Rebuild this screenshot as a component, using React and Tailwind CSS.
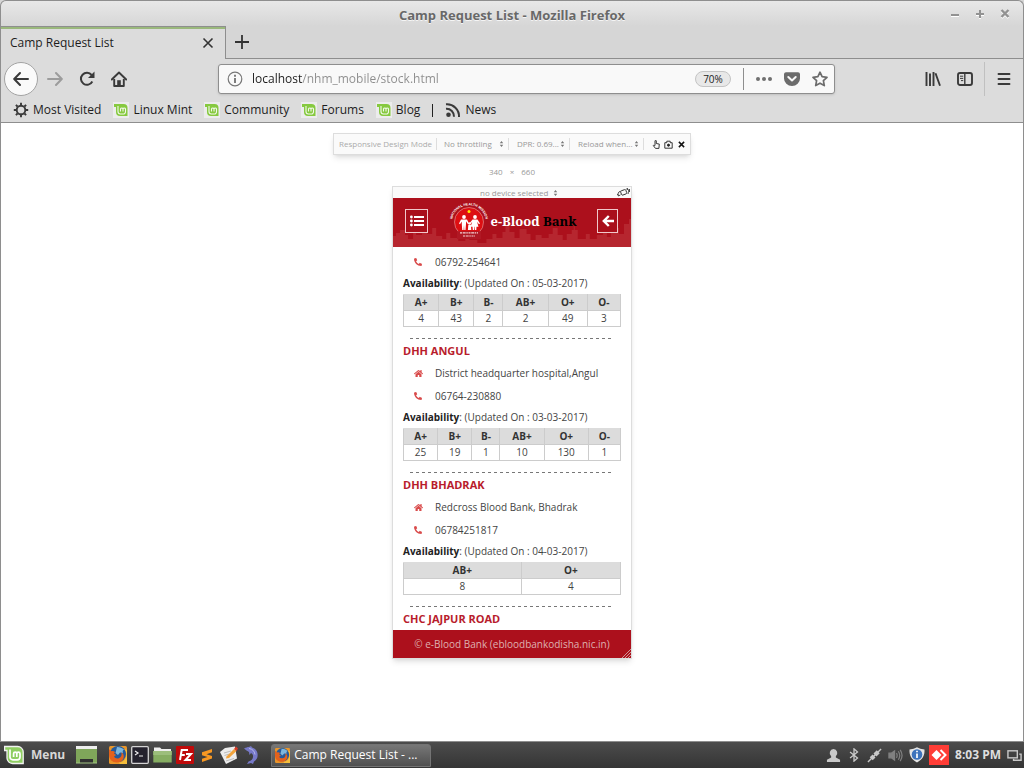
import React from "react";
import { FaHome, FaPhoneAlt } from "react-icons/fa";

const BANKS = [
  {
    phone: "06792-254641",
    updated: "05-03-2017",
    stock: [["A+", 4, "w-[35px]"], ["B+", 43, "w-[35px]"], ["B-", 2, "w-[29px]"], ["AB+", 2, "w-[45px]"], ["O+", 49, "w-[39px]"], ["O-", 3, "w-[33px]"]],
  },
  {
    name: "DHH ANGUL",
    address: "District headquarter hospital,Angul",
    phone: "06764-230880",
    updated: "03-03-2017",
    stock: [["A+", 25, "w-[34px]"], ["B+", 19, "w-[34px]"], ["B-", 1, "w-[28px]"], ["AB+", 10, "w-[44px]"], ["O+", 130, "w-[44px]"], ["O-", 1, "w-[32px]"]],
  },
  {
    name: "DHH BHADRAK",
    address: "Redcross Blood Bank, Bhadrak",
    phone: "06784251817",
    updated: "04-03-2017",
    stock: [["AB+", 8, "w-[117px]"], ["O+", 4, "w-[99px]"]],
  },
];

function MintMark({ className }) {
  return (
    <svg viewBox="0 0 16 16" className={className} aria-hidden="true">
      <rect width="16" height="16" fill="#ececec" />
      <path d="M1 2h9.5a4 4 0 0 1 4 4v8H7a4 4 0 0 1-4-4V5H1z" fill="#86c93f" />
      <path d="M5 4v5.6A2.4 2.4 0 0 0 7.4 12h2.8a2.3 2.3 0 0 0 2.3-2.4V7a1.3 1.3 0 0 0-2.5 0v2.5V7a1.3 1.3 0 0 0-2.5 0v2.5" fill="none" stroke="#f3f9ec" strokeWidth="1.1" />
    </svg>
  );
}

function MintLogo({ className }) {
  return (
    <svg viewBox="0 0 20 20" className={className} aria-hidden="true">
      <path d="M.6 1.5h13a5.6 5.6 0 0 1 5.6 5.6v11.4H8.5A5.6 5.6 0 0 1 3 13V5.500H.6z" fill="#8fce62" stroke="#f2f2f2" strokeWidth="1.3" />
      <path d="M6 4.500V12a2.800 2.800 0 0 0 2.800 2.800h4.400A2.800 2.800 0 0 0 16 12V8.700a1.600 1.600 0 0 0-3.200 0V12 8.700a1.600 1.600 0 0 0-3.200 0V12" fill="none" stroke="#fff" strokeWidth="1.7" />
    </svg>
  );
}

function FirefoxIcon({ className }) {
  return (
    <svg viewBox="0 0 18 18" className={className} aria-hidden="true">
      <rect width="18" height="18" rx="1.5" fill="#e9962b" />
      <circle cx="9" cy="8" r="8" fill="#245a9c" />
      <path d="M8 1c3 0 5 1 7 2.500-1.500 1-1.500 2-1 3.500l-3-.5-2 2.500-2.500-2z" fill="#7db7dd" />
      <path d="M0 3.500c1.200.2 2 .9 2.400 1.800C3.600 4.800 5 5 6 6L5 7.800l2.200 1.200-2.200 1.500c1 2.400 5 2.700 6.800.2 1-1.500 1-3 .4-4.500 2.300 1 3.100 3.500 2.300 6-1 2.800-3.700 4.300-6.700 4.300C3.500 16.500 0 13.500 0 9z" fill="#e4611c" />
      <path d="M15.500 3c2.200 3 2.500 6.500.9 9.500-1.400 2.500-3.600 3.800-6.400 4.300L11 18h7V4z" fill="#f6bf3c" />
    </svg>
  );
}

function Updown() {
  return (
    <svg viewBox="0 0 5 7" className="pointer-events-none h-[6px] w-[5px] shrink-0" fill="#777" aria-hidden="true">
      <path d="M2.500 0 4.500 2.500H.5zM2.500 7 .5 4.500h4z" />
    </svg>
  );
}

function ToolSelect({ label, value, width, className = "" }) {
  return (
    <label className={"flex h-full items-center justify-end border-r border-[#ddd] pr-1 " + className}>
      <select aria-label={label} className={"appearance-none bg-transparent text-[8px] leading-3 text-[#999] outline-none " + width}>
        <option>{value}</option>
      </select>
      <Updown />
    </label>
  );
}

function WindowTitle() {
  return (
    <header className="flex h-[26px] shrink-0 items-center rounded-t-md border border-b-0 border-[#8e8e8e] bg-linear-to-b from-[#e8e8e8] to-[#d6d6d6] px-[10px]">
      <span className="w-[76px]" />
      <h1 className="flex-1 pt-[3px] text-center text-[13px] leading-5 font-bold text-[#686868] [text-shadow:0_1px_0_#f5f5f5]">Camp Request List - Mozilla Firefox</h1>
      <div className="flex w-[76px] items-center justify-end gap-[9px] pt-px text-[#929292]">
        <button aria-label="Minimize" className="size-4">
          <svg viewBox="0 0 16 16" className="drop-shadow-[0_1px_0_#fff]"><path d="M4 9h8" stroke="currentColor" strokeWidth="2" /></svg>
        </button>
        <button aria-label="Maximize" className="size-4">
          <svg viewBox="0 0 16 16" className="drop-shadow-[0_1px_0_#fff]"><path d="M4 8h8M8 4v8" stroke="currentColor" strokeWidth="2" /></svg>
        </button>
        <button aria-label="Close window" className="size-4">
          <svg viewBox="0 0 16 16" className="drop-shadow-[0_1px_0_#fff]"><path d="m4.500 4 7 7m0-7-7 7" stroke="currentColor" strokeWidth="2.400" /></svg>
        </button>
      </div>
    </header>
  );
}

function TabStrip() {
  return (
    <div className="flex h-[33px] shrink-0 bg-[#d6d6d6]">
      <div className="flex w-[225px] items-center justify-between border-t border-r border-[#8e8e8e] bg-[#dcdcdc] pr-[11px] pl-[9px] shadow-[inset_0_2px_0_#9ab87c]">
        <span className="text-[12px] leading-4 text-[#1c1c1c]">Camp Request List</span>
        <button aria-label="Close tab" className="size-3 text-[#333]">
          <svg viewBox="0 0 12 12" fill="none" stroke="currentColor" strokeWidth="1.6"><path d="m1.500 1.500 9 9m0-9-9 9" /></svg>
        </button>
      </div>
      <div className="flex flex-1 items-center border-b border-[#8e8e8e] pl-2">
        <button aria-label="New tab" className="size-4 text-[#333]">
          <svg viewBox="0 0 16 16" fill="none" stroke="currentColor" strokeWidth="1.800"><path d="M8 1v14M1 8h14" /></svg>
        </button>
      </div>
    </div>
  );
}

function NavBar() {
  return (
    <div className="flex h-10 shrink-0 items-center bg-[#dcdcdc] text-[#3a3a3a]">
      <button aria-label="Back" className="ml-[3px] flex size-[34px] items-center justify-center rounded-full border border-[#a3a3a3] bg-[#fafafa]">
        <svg viewBox="0 0 16 16" className="size-4" fill="none" stroke="currentColor" strokeWidth="2" strokeLinecap="round" strokeLinejoin="round"><path d="M15 8H1.500M7 2 1.200 8 7 14" /></svg>
      </button>
      <button aria-label="Forward" className="ml-[9px] text-[#9c9c9c]">
        <svg viewBox="0 0 16 16" className="size-4" fill="none" stroke="currentColor" strokeWidth="2" strokeLinecap="round" strokeLinejoin="round"><path d="M1 8h13.500M9 2 14.800 8 9 14" /></svg>
      </button>
      <button aria-label="Reload" className="ml-4">
        <svg viewBox="0 0 16 16" className="size-4" fill="none" stroke="currentColor" strokeWidth="2"><path d="M13.300 10.500A6 6 0 1 1 12.600 4" /><path d="M15.500.5V7H9z" fill="currentColor" stroke="none" /></svg>
      </button>
      <button aria-label="Home" className="ml-4">
        <svg viewBox="0 0 16 16" className="size-4" fill="none" stroke="currentColor" strokeWidth="1.900" strokeLinejoin="round"><path d="M.8 8.500 8 1.500l7.200 7" strokeLinecap="round" /><path d="M3.200 8v7h9.600V8" /><path d="M6.200 9.200h3.600V15H6.200z" fill="currentColor" stroke="none" /></svg>
      </button>
      <form className="ml-[91px] flex h-[30px] max-w-[617px] flex-1 items-center rounded-[3px] border border-[#8e8e8e] bg-[#f9f9f9] px-[6px] shadow-sm">
        <svg viewBox="0 0 16 16" className="ml-[2px] size-4 shrink-0 text-[#777]" fill="none" stroke="currentColor"><circle cx="8" cy="8" r="6.800" strokeWidth="1.200" /><path d="M8 7v5" strokeWidth="1.900" /><path d="M8 3.800v2" strokeWidth="1.900" /></svg>
        <input aria-label="Address" defaultValue="localhost/nhm_mobile/stock.html" className="ml-[9px] min-w-0 flex-1 bg-[linear-gradient(to_right,#1c1c1c_50px,#8c8c8c_50px)] bg-clip-text text-[12px] leading-5 text-transparent outline-none" />
        <button type="button" className="h-4 w-9 rounded-full border border-[#c4c4c4] bg-[#e8e8e8] text-[10px] leading-[13px] text-[#222]">70%</button>
        <span className="mx-3 h-[22px] w-px bg-[#8e8e8e]" />
        <button type="button" aria-label="Page actions" className="text-[#707070]">
          <svg viewBox="0 0 16 16" className="size-4" fill="currentColor"><circle cx="2" cy="8" r="2" /><circle cx="8" cy="8" r="2" /><circle cx="14" cy="8" r="2" /></svg>
        </button>
        <button type="button" aria-label="Save to Pocket" className="ml-3 text-[#6c6c6c]">
          <svg viewBox="0 0 16 16" className="size-4"><path d="M2 1.200h12A2 2 0 0 1 16 3v4.500a8 7.500 0 0 1-16 0V3a2 2 0 0 1 2-1.800z" fill="currentColor" /><path d="m4.300 6 3.700 3.500L11.700 6" fill="none" stroke="#f9f9f9" strokeWidth="2" strokeLinecap="round" strokeLinejoin="round" /></svg>
        </button>
        <button type="button" aria-label="Bookmark this page" className="ml-3 text-[#6c6c6c]">
          <svg viewBox="0 0 16 16" className="size-4" fill="none" stroke="currentColor" strokeWidth="1.700" strokeLinejoin="round"><path d="m8 1.200 2.100 4.500 4.900.6-3.600 3.400.9 4.900L8 12.200l-4.300 2.400.9-4.900L1 6.300l4.900-.6z" /></svg>
        </button>
      </form>
      <div className="ml-auto flex items-center">
        <button aria-label="Library">
          <svg viewBox="0 0 16 16" className="size-4" fill="none" stroke="currentColor" strokeWidth="1.900"><path d="M1.500 1v14M5 2.500V15M8.500 1v14M10.500 2.200 15 14.700" /></svg>
        </button>
        <button aria-label="Sidebars" className="ml-4">
          <svg viewBox="0 0 16 16" className="size-4" fill="none" stroke="currentColor"><rect x="1" y="2" width="14" height="12" rx="2" strokeWidth="1.900" /><path d="M7.800 2v12" strokeWidth="1.400" /><path d="M3 5.200h3.200M3 7.400h3.200M4 9.600h2.200" /></svg>
        </button>
        <span className="ml-[11px] h-[34px] w-px bg-[#c0c0c0]" />
        <button aria-label="Open menu" className="mr-[11px] ml-[11px]">
          <svg viewBox="0 0 16 16" className="size-4" fill="none" stroke="currentColor" strokeWidth="1.900" strokeLinecap="round"><path d="M2.500 3h11M2.500 8h11M2.500 13h11" /></svg>
        </button>
      </div>
    </div>
  );
}

function BookmarksBar() {
  const sites = ["Linux Mint", "Community", "Forums", "Blog"];
  return (
    <nav className="flex h-6 shrink-0 items-center border-b border-[#8e8e8e] bg-[#dcdcdc] pb-px pl-3 text-[12px] leading-4 text-[#1c1c1c]">
      <a href="#most-visited" className="flex items-center gap-1">
        <svg viewBox="0 0 16 16" className="size-4" fill="none" stroke="#3a3a3a"><circle cx="8" cy="8" r="4.300" strokeWidth="1.900" /><path d="M8 3V.8M8 13v2.200M3 8H.8M13 8h2.200M4.500 4.500 2.900 2.900M11.500 11.500l1.600 1.600M4.500 11.500l-1.600 1.600M11.500 4.500l1.600-1.600" strokeWidth="1.900" /></svg>
        Most Visited
      </a>
      {sites.map((site) => (
        <a key={site} href="#site" className="ml-3 flex items-center gap-1">
          <MintMark className="size-4" />
          {site}
        </a>
      ))}
      <span className="mx-3 h-[13px] w-px bg-[#222]" />
      <a href="#news" className="flex items-center gap-1">
        <svg viewBox="0 0 16 16" className="size-4" fill="none" stroke="#3a3a3a" strokeWidth="2"><circle cx="3.500" cy="12.700" r="2.300" fill="#3a3a3a" stroke="none" /><path d="M1 6.800a7.500 7.500 0 0 1 8 8M1 2.300A12 12 0 0 1 14 15" /></svg>
        News
      </a>
    </nav>
  );
}

function ResponsiveToolbar() {
  return (
    <div className="mt-[10px] flex h-[22px] w-[358px] items-center border border-[#ddd] bg-[#fafafa] py-1 text-[8px] text-[#aaa] shadow-md">
      <span className="w-[103px] border-r border-[#ddd] pl-[5px] leading-3 whitespace-nowrap">Responsive Design Mode</span>
      <ToolSelect label="Network throttling" value="No throttling" width="w-[55px]" className="w-[72px]" />
      <ToolSelect label="Device pixel ratio" value="DPR: 0.69..." width="w-[43px]" className="w-[61px]" />
      <ToolSelect label="Reload behaviour" value="Reload when..." width="w-[56px]" className="w-[74px]" />
      <div className="flex flex-1 items-center justify-center gap-[3px] pl-[2px] text-[#222]">
        <button aria-label="Touch simulation">
          <svg viewBox="0 0 9 9" className="size-[9px]" fill="none" stroke="currentColor" strokeWidth=".9" strokeLinejoin="round"><path d="M3 5.500V1a.6.6 0 0 1 1.300 0v2.500l3 .6-.4 4.300H3.500L1.300 5.600c.3-.7 1-.5 1.700.4" /></svg>
        </button>
        <button aria-label="Take a screenshot">
          <svg viewBox="0 0 9 9" className="size-[9px]" fill="none" stroke="currentColor" strokeWidth=".9"><path d="M.8 2.700h2v-1.500h3.400v1.500h2v5.500H.8z" /><circle cx="4.500" cy="5.200" r="1.100" fill="currentColor" /></svg>
        </button>
        <button aria-label="Close responsive mode" className="ml-[2px]">
          <svg viewBox="0 0 8 8" className="size-[7px]" fill="none" stroke="#111" strokeWidth="1.700"><path d="m1 1 6 6m0-6L1 7" /></svg>
        </button>
      </div>
    </div>
  );
}

function Emblem() {
  return (
    <svg viewBox="0 0 42 36" className="h-9 w-[42px] shrink-0" aria-hidden="true">
      <defs><path id="emblem-arc" d="M7.500 29.500A17 17 0 1 1 34.500 29.500" /></defs>
      <circle cx="21" cy="19" r="14.500" fill="#dd0f12" stroke="#e9a6a6" strokeWidth=".6" />
      <text fontSize="3.400" fontWeight="700" fill="#fff" fontFamily="Liberation Sans, Arial, sans-serif" textAnchor="middle">
        <textPath href="#emblem-arc" startOffset="50%">NATIONAL HEALTH MISSION</textPath>
      </text>
      <circle cx="21" cy="8.500" r="1.500" fill="#ffe800" />
      <g fill="#fff">
        <circle cx="16" cy="14" r="1.900" />
        <path d="M13 16.500h6l2 4-1 .8-2-3v2.700l-.5 6h-1.200L16 22l-.4 5h-1.400l-.4-6v-2.500L12 21.300l-1-.8z" />
        <circle cx="27" cy="14" r="1.900" />
        <path d="M24.500 16.500h5l2.500 4-1 .8-2-2.500 1.500 5h-2L28.300 27H27l-.2-3.200h-.4L26.200 27h-1.400l-.3-3.200h-2l1.800-5-2 2.500-1-.8z" />
        <circle cx="21.500" cy="20.500" r="1.300" />
        <path d="M20.300 22h2.600l.4 5h-3.400z" />
      </g>
      <rect x="9" y="28.200" width="24" height="8" fill="#b01824" />
      <path d="M12 29.800h18M15 33h12" stroke="#f4d4d4" strokeWidth="1.200" strokeDasharray="2 .7 3 .6 1.500 .7" />
    </svg>
  );
}

function AppHeader() {
  return (
    <header className="relative flex h-[49px] items-center justify-between bg-[#ac101c] pr-[13px] pb-[3px] pl-3">
      <svg viewBox="0 0 237 36" preserveAspectRatio="none" className="absolute inset-x-0 bottom-0 h-9 w-full" aria-hidden="true">
        <path d="M0 36V25h3v-3h4v-3h5v5h3v4h5v-7h3v3h6V3l3-3 2 3v20h5V17h4v8h6v3h4v-6h4v5h8v3h7v-5h4v4h8v3h9v-4h6v-5h4v4h6v-6h3v-6h4v6h5v6h5v-9h7v5h4v6h5v-5h6v3h7v-4h4v-6h5v7h5v5h4v-6h5v-4h2v-5h1v5h3v9h8v-5h4v5h7v-4h6V14h4v12h4v-5h4v-4h4v6h5v-10h5v-5h4v11h3V36z" fill="#b6262f" />
      </svg>
      <button aria-label="Menu" className="relative flex h-6 w-[23px] items-center justify-center border border-[#f0c8cb] bg-[#a90f1b] text-white">
        <svg viewBox="0 0 14 12" className="h-3 w-[14px]" fill="currentColor"><path d="M4 1h10v2H4zM4 5h10v2H4zM4 9h10v2H4z" /><circle cx="1.400" cy="2" r="1.400" /><circle cx="1.400" cy="6" r="1.400" /><circle cx="1.400" cy="10" r="1.400" /></svg>
      </button>
      <div className="relative flex items-center">
        <Emblem />
        <span className="font-['Noto_Serif','Liberation_Serif',serif] text-[13px] leading-5 font-bold whitespace-nowrap text-white">
          e-Blood <span className="text-black">Bank</span>
        </span>
      </div>
      <button aria-label="Go back" className="relative flex h-6 w-[21px] items-center justify-center border border-[#f0c8cb] bg-[#a90f1b] text-white">
        <svg viewBox="0 0 12 12" className="size-3" fill="none" stroke="currentColor" strokeWidth="2.400"><path d="M12 6H2M6.800 1 1.800 6l5 5" /></svg>
      </button>
    </header>
  );
}

function StockTable({ stock }) {
  return (
    <table className="mt-px w-full table-fixed border-collapse text-center">
      <thead>
        <tr className="bg-[#dcdcdc]">
          {stock.map(([group, , width]) => (
            <th key={group} scope="col" className={"border border-[#ccc] border-t-[#dcdcdc] p-0 text-[10px] leading-[15px] font-bold text-[#333] " + width}>{group}</th>
          ))}
        </tr>
      </thead>
      <tbody>
        <tr>
          {stock.map(([group, units]) => (
            <td key={group} className="border border-[#ccc] p-0 text-[10px] leading-[15px]">{units}</td>
          ))}
        </tr>
      </tbody>
    </table>
  );
}

function ContactRow({ icon, height, children }) {
  return (
    <p className={"flex items-center pl-[11px] " + height}>
      <span className="flex w-[21px] text-[#d94b4b]">{icon}</span>
      {children}
    </p>
  );
}

function BankEntry({ bank }) {
  return (
    <section className="px-[10px]">
      {bank.name && <h2 className="h-[23px] text-[11px] leading-[23px] font-bold text-[#b81c2c]">{bank.name}</h2>}
      {bank.address && <ContactRow height="h-[22px]" icon={<FaHome className="size-[9px]" />}>{bank.address}</ContactRow>}
      <ContactRow height="h-6" icon={<FaPhoneAlt className="size-2" />}>{bank.phone}</ContactRow>
      <p className="h-[19px] leading-[19px]">
        <strong className="text-[#222]">Availability</strong>: (Updated On : {bank.updated})
      </p>
      <StockTable stock={bank.stock} />
      <svg className="mt-[11px] ml-[7px] block h-px w-[203px]" aria-hidden="true">
        <path d="M0 .5h203" stroke="#777" strokeDasharray="3 3" />
      </svg>
    </section>
  );
}

function Device() {
  return (
    <div className="mt-2 w-[240px] border border-[#ddd] bg-white shadow-md">
      <div className="flex h-[11px] items-center bg-[#fafafa]">
        <span className="w-7" />
        <label className="flex flex-1 items-center justify-center">
          <select aria-label="Device" className="h-[11px] w-[73px] appearance-none bg-transparent text-[8px] leading-[11px] text-[#999] outline-none">
            <option>no device selected</option>
          </select>
          <Updown />
        </label>
        <button aria-label="Rotate viewport" className="mr-px">
          <svg viewBox="0 0 13 9" className="h-[9px] w-[13px]" fill="none" stroke="#333" strokeWidth=".9"><rect x="4" y="2" width="5.500" height="4.500" rx="1" transform="rotate(-20 7 4.500)" /><path d="M3.300 3.200C.8 4.200.8 6 1.500 7.500M.3 6l1.200 2 2-1.200M9.500 1c2.300-.5 2.500 1.500 1.500 5M10.300 0v2M12.500 1v3" /></svg>
        </button>
      </div>
      <AppHeader />
      <main className="pt-[3px] font-['Open_Sans','Noto_Sans',sans-serif] text-[10px] text-[#444]">
        {BANKS.map((bank) => <BankEntry key={bank.phone} bank={bank} />)}
        <h2 className="h-[23px] px-[10px] text-[11px] leading-[23px] font-bold text-[#b81c2c]">CHC JAJPUR ROAD</h2>
      </main>
      <footer className="relative h-7 bg-[#ac101c] text-center text-[10px] leading-7 text-[#dfb0b0]">
        © e-Blood Bank (ebloodbankodisha.nic.in)
        <svg viewBox="0 0 9 9" className="absolute right-0 bottom-0 size-[9px]" fill="none" stroke="#d8b6b8" strokeWidth=".8" aria-hidden="true"><path d="m0 9 9-9M3 9l6-6M6 9l3-3" /></svg>
      </footer>
    </div>
  );
}

function Taskbar() {
  return (
    <footer className="flex h-[26px] shrink-0 items-center bg-linear-to-b from-[#4c4c4c] to-[#353535] text-[#d8d8d8]">
      <button className="ml-1 flex items-center gap-[7px] text-[12px] leading-5 font-bold">
        <MintLogo className="size-5" />
        Menu
      </button>
      <button aria-label="Show desktop" className="ml-[11px]">
        <svg viewBox="0 0 21 18" className="h-[18px] w-[21px]"><rect width="21" height="17" fill="#7fa65a" /><rect width="21" height="3" fill="#eee" /><path d="M4 17.500V13h13v4.500z" fill="#303030" /><path d="M0 17h21" stroke="#a4c584" /></svg>
      </button>
      <div className="ml-3 flex items-center gap-1">
        <button aria-label="Firefox"><FirefoxIcon className="size-[18px]" /></button>
        <button aria-label="Terminal">
          <svg viewBox="0 0 18 18" className="size-[18px]"><rect x=".7" y=".7" width="16.600" height="16.600" rx="1" fill="#24222d" stroke="#d4d4d4" strokeWidth="1.300" /><path d="m4 5 3 2-3 2M8 10h4" fill="none" stroke="#eee" strokeWidth="1.200" /></svg>
        </button>
        <button aria-label="Files">
          <svg viewBox="0 0 19 18" className="h-[18px] w-[19px]"><path d="M1 4V1.500h6L8.500 3H18v3H1z" fill="#eee" /><path d="M.3 5h18.400v11.500H.3z" fill="#86ad62" /><path d="M.3 5h18.400v4H.3z" fill="#9cbe7c" /></svg>
        </button>
        <button aria-label="FileZilla">
          <svg viewBox="0 0 18 18" className="size-[18px]"><rect width="18" height="18" rx="1" fill="#bf0a0a" /><path d="M4 14 5.700 4H12M4.800 9h4M10 8h5l-5.500 6H15" fill="none" stroke="#fff" strokeWidth="2" /></svg>
        </button>
        <button aria-label="Sublime Text">
          <svg viewBox="0 0 18 18" className="size-[18px]"><path d="M4 6.300 14 3v3.300L8.500 8.200 14 10v2.500L4 16v-3.300L9.500 11 4 9.300z" fill="#f89822" /></svg>
        </button>
        <button aria-label="Text editor">
          <svg viewBox="0 0 18 18" className="size-[18px]"><path d="m0 6 5-4 10-1.500 2 12L6 18z" fill="#ececec" /><path d="m4 7 7-2M4.500 9.500l5-1.500M6 15l8-2.500" stroke="#bbb" /><path d="m6.500 10.500 7.500-7.500 2.500 2-7.500 7L6 12.500z" fill="#f1a33c" /><path d="m14 3 2-2.500L18 2.500l-1.500 2.500z" fill="#d93a28" /></svg>
        </button>
        <button aria-label="MySQL Workbench">
          <svg viewBox="0 0 18 18" className="size-[18px]"><path d="M2 2.500C4.500 1.500 5 1 7 1L9 0l1 1.500c3 .8 5 3 5.500 6 .5 3.500-.5 6-3.500 8l-1 2.500-2-1-4 1 1.500-2.500c3-1 5-3 4.500-6-.3-1.200-1-2-2-2.500L7.500 9 7 6C5.500 5 3.500 4 2 2.500z" fill="#7779c8" /><path d="M7 2.500c3.500.5 5.500 2.500 6 6" fill="none" stroke="#b6b8ea" /></svg>
        </button>
      </div>
      <button className="ml-[11px] flex h-[23px] w-[160px] items-center gap-1 rounded-t-[3px] border border-[#747474] bg-linear-to-b from-[#777] to-[#505050] px-[3px] text-[12px] leading-4 text-white">
        <FirefoxIcon className="size-[15px]" />
        Camp Request List - ...
      </button>
      <div className="ml-auto flex items-center gap-[6px] pr-[2px] text-[#c9c9c9]">
        <svg viewBox="0 0 16 16" className="size-[15px]" fill="currentColor" aria-hidden="true"><path d="M8 1a4 4.300 0 0 1 2.500 7.700v1.500L15 12.500V15H1v-2.500l4.500-2.300V8.700A4 4.300 0 0 1 8 1z" /></svg>
        <svg viewBox="0 0 16 16" className="size-[14px]" fill="none" stroke="currentColor" strokeWidth="1.500" aria-hidden="true"><path d="m3.500 4.500 8.500 7L8 15V1l4 3.500-8.500 7" /></svg>
        <svg viewBox="0 0 16 16" className="size-[15px]" fill="none" stroke="currentColor" aria-hidden="true"><path d="M1 15 15 1" strokeWidth="1.500" /><path d="m4.500 11.500 3-3M8.500 7.500l3.500-3.500" strokeWidth="4.500" /></svg>
        <svg viewBox="0 0 16 16" className="size-[15px]" fill="none" stroke="#808080" strokeWidth="1.300" aria-hidden="true"><path d="M1 5.500h2.500L7 3v10L3.500 10.500H1z" fill="#808080" /><path d="M9 5.500q1.500 2.500 0 5M11 3.500q3 4.500 0 9M13 2q4 6 0 12" /></svg>
        <svg viewBox="0 0 16 16" className="size-4" aria-hidden="true"><path d="M8 .3Q11 2 15.500 2.500c.3 6-2 10-7.500 13C2.500 12.500.2 8.500.5 2.500Q5 2 8 .3z" fill="#e4e4e4" /><circle cx="8" cy="7.500" r="5.300" fill="#3d73bc" /><path d="M8 6.500v4.500M8 3.800v1.500" stroke="#fff" strokeWidth="1.700" /></svg>
        <svg viewBox="0 0 20 20" className="-ml-0.5 size-5" aria-hidden="true"><rect width="20" height="20" fill="#ff3d36" /><path d="M2.500 10 7.500 5l5 5-5 5z" fill="#fff" /><path d="m11.500 5 5 5-5 5" fill="none" stroke="#fff" strokeWidth="2" /></svg>
        <span className="text-[12px] leading-4 font-bold whitespace-nowrap text-[#dedede]">8:03 PM</span>
        <svg viewBox="0 0 16 16" className="size-[15px]" fill="none" stroke="currentColor" strokeWidth="1.500" aria-hidden="true"><rect x="1" y="3" width="10" height="7.500" /><path d="M13 6.500h2v6.500H7v-1.500" /></svg>
      </div>
    </footer>
  );
}

export default function App() {
  return (
    <div className="flex min-h-screen flex-col bg-[#d6d6d6] font-['Open_Sans','Noto_Sans',sans-serif]">
      <WindowTitle />
      <div className="flex flex-1 flex-col border-x border-b border-[#8e8e8e]">
        <TabStrip />
        <NavBar />
        <BookmarksBar />
        <div className="flex flex-1 flex-col items-center bg-white pb-6">
          <ResponsiveToolbar />
          <div className="mt-[11px] flex gap-[7px] text-[8px] leading-3 text-[#999]">
            <span>340</span><span>×</span><span>660</span>
          </div>
          <Device />
        </div>
      </div>
      <Taskbar />
    </div>
  );
}
